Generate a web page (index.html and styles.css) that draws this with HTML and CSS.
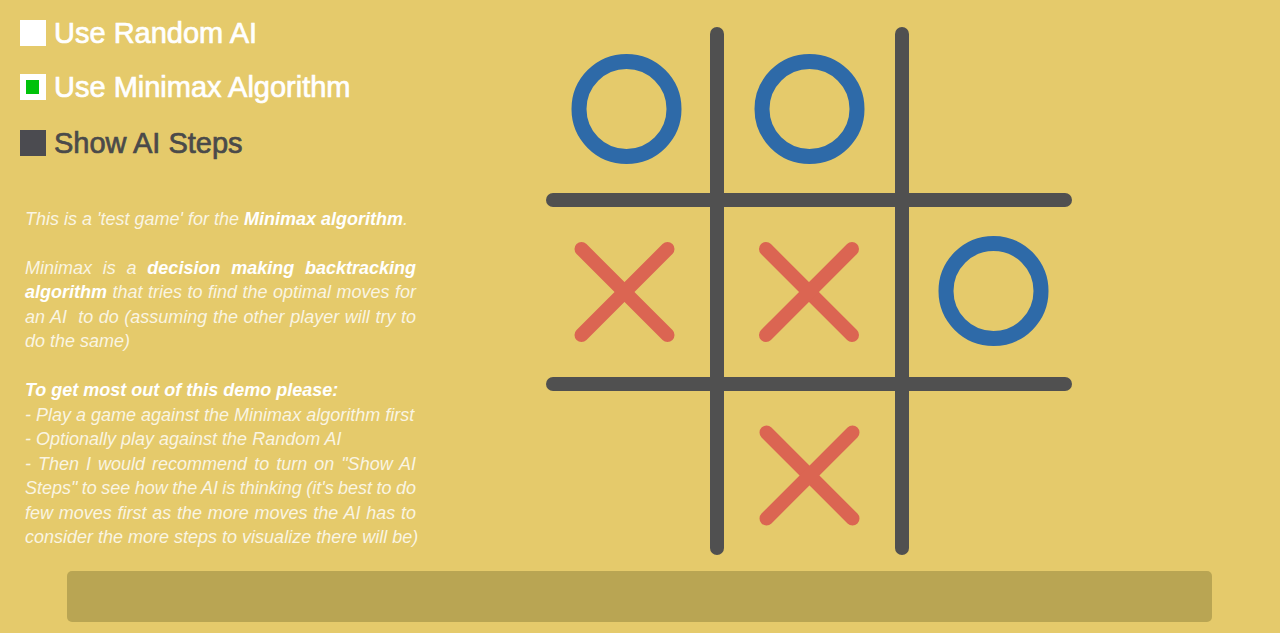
FILE: index.html
```html
<!DOCTYPE html>
<html>
<head>
<meta charset="utf-8">
<link rel="stylesheet" href="styles.css">
</head>
<body>
<div class="page">
  <div class="top">
    <div class="panel">
      <div class="toggles">
        <div class="toggle t1"><span class="box box-white"></span><span class="label">Use Random AI</span></div>
        <div class="toggle t2"><span class="box box-white box-on"><span class="dot"></span></span><span class="label">Use Minimax Algorithm</span></div>
        <div class="toggle t3"><span class="box box-dark"></span><span class="label label-dark">Show AI Steps</span></div>
      </div>
      <div class="desc">
        <p class="line">This is a 'test game' for the <b>Minimax algorithm</b>.</p>
        <p class="line blank">&nbsp;</p>
        <p class="line jl">Minimax is a <b>decision making backtracking</b></p>
        <p class="line jl"><b>algorithm</b> that tries to find the optimal moves for</p>
        <p class="line jl">an AI&nbsp; to do (assuming the other player will try to</p>
        <p class="line">do the same)</p>
        <p class="line blank">&nbsp;</p>
        <p class="line"><b>To get most out of this demo please:</b></p>
        <p class="line">- Play a game against the Minimax algorithm first</p>
        <p class="line">- Optionally play against the Random AI</p>
        <p class="line jl">- Then I would recommend to turn on "Show AI</p>
        <p class="line jl">Steps" to see how the AI is thinking (it's best to do</p>
        <p class="line jl">few moves first as the more moves the AI has to</p>
        <p class="line">consider the more steps to visualize there will be)</p>
      </div>
    </div>
    <div class="board">
      <svg width="540" height="540" viewBox="540 20 540 540" xmlns="http://www.w3.org/2000/svg">
        <g stroke="#505050" stroke-width="14" stroke-linecap="round">
          <line x1="717" y1="34" x2="717" y2="548"/>
          <line x1="902" y1="34" x2="902" y2="548"/>
          <line x1="553" y1="200" x2="1065" y2="200"/>
          <line x1="553" y1="384" x2="1065" y2="384"/>
        </g>
        <g fill="none" stroke="#2e6aa8" stroke-width="15">
          <circle cx="626.5" cy="109" r="47.5"/>
          <circle cx="809.5" cy="109" r="47.5"/>
          <circle cx="993.5" cy="291" r="47.5"/>
        </g>
        <g stroke="#db6552" stroke-width="14" stroke-linecap="round">
          <line x1="581.5" y1="249" x2="667.5" y2="335"/>
          <line x1="667.5" y1="249" x2="581.5" y2="335"/>
          <line x1="766" y1="249" x2="852" y2="335"/>
          <line x1="852" y1="249" x2="766" y2="335"/>
          <line x1="766.5" y1="432.5" x2="852.5" y2="518.5"/>
          <line x1="852.5" y1="432.5" x2="766.5" y2="518.5"/>
        </g>
      </svg>
    </div>
  </div>
  <div class="bar"></div>
</div>
</body>
</html>
```

FILE: styles.css
```css
html, body {
  margin: 0;
  padding: 0;
}
body {
  background: #e5ca6b;
  width: 1280px;
  height: 633px;
  overflow: hidden;
  font-family: "Liberation Sans", Arial, sans-serif;
}
.page {
  display: flex;
  flex-direction: column;
}
.top {
  display: flex;
  height: 571px;
}
.panel {
  flex: 0 0 540px;
  box-sizing: border-box;
  padding: 20px 0 0 20px;
}
.toggles {
  display: flex;
  flex-direction: column;
}
.toggle {
  display: flex;
  align-items: center;
  gap: 8px;
  height: 26px;
}
.t2 { margin-top: 28px; }
.t3 { margin-top: 30px; }
.box {
  flex: 0 0 26px;
  width: 26px;
  height: 26px;
  box-sizing: border-box;
}
.box-white { background: #ffffff; }
.box-on {
  padding: 6px 7px 6px 6px;
}
.dot {
  display: block;
  width: 13px;
  height: 14px;
  background: #00c20a;
}
.box-dark { background: #4b4b50; }
.label {
  font-size: 29px;
  line-height: 26px;
  color: #ffffff;
  white-space: nowrap;
  -webkit-text-stroke: 0.7px currentColor;
}
.label-dark { color: #4a4a4a; }
.desc {
  margin-top: 50.5px;
  margin-left: 5px;
  width: 391px;
  font-size: 18px;
  line-height: 24.5px;
  font-style: italic;
  color: rgba(255, 255, 255, 0.82);
}
.desc b {
  color: #ffffff;
  font-weight: bold;
}
.line {
  margin: 0;
  white-space: nowrap;
  text-align: left;
}
.jl {
  white-space: normal;
  word-spacing: -3px;
  text-align: justify;
  text-align-last: justify;
}
.board {
  margin-top: 20px;
  width: 540px;
  height: 540px;
}
.board svg {
  display: block;
}
.bar {
  margin-left: 67px;
  width: 1145px;
  height: 51px;
  background: #b9a553;
  border-radius: 5px;
}
```
